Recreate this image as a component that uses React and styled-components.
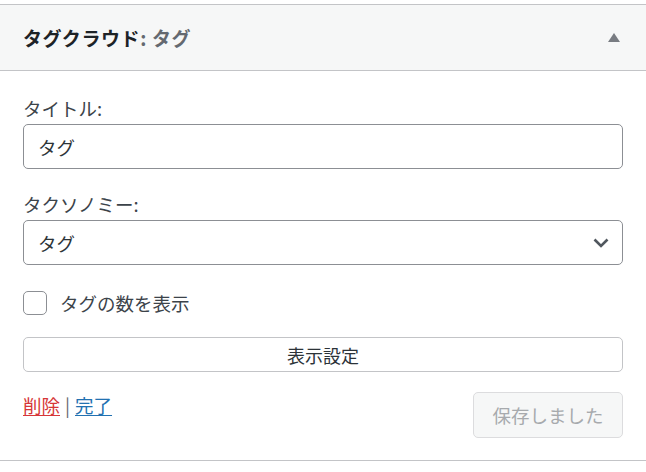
import React from "react";
import styled, { createGlobalStyle } from "styled-components";

const Global = createGlobalStyle`
  html, body { margin: 0; padding: 0; background: #fff; }
  body { font-family: "Noto Sans CJK JP", "Noto Sans", sans-serif; color: #3c434a; }
  * { box-sizing: border-box; }
`;

const Page = styled.div`
  width: 646px;
  height: 472px;
  padding-top: 4px;
  background: #fff;
`;

const Widget = styled.div`
  border-top: 1px solid #c3c4c7;
  border-bottom: 1px solid #c3c4c7;
  background: #fff;
`;

const Header = styled.div`
  height: 66px;
  background: #f6f7f7;
  border-bottom: 1px solid #c3c4c7;
  display: flex;
  align-items: center;
  justify-content: space-between;
  padding: 0 26px 0 23px;
`;

const Title = styled.h3`
  margin: 0;
  font-size: 19px;
  line-height: 26px;
  font-weight: 700;
  letter-spacing: 0.6px;
  color: #1d2327;
`;

const Sub = styled.span`
  font-weight: 600;
  color: #646970;
`;

const Toggle = styled.svg`
  width: 12px;
  height: 9px;
  display: block;
`;

const Body = styled.div`
  padding: 24px 23px 22px 23px;
  display: flex;
  flex-direction: column;
`;

const Field = styled.div`
  display: flex;
  flex-direction: column;
  gap: 3px;
  margin-bottom: ${(p) => p.$mb || 0}px;
`;

const Label = styled.label`
  font-size: 18.5px;
  line-height: 26px;
  color: #3c434a;
`;

const Input = styled.div`
  height: 45px;
  border: 1px solid #8c8f94;
  border-radius: 5px;
  display: flex;
  align-items: center;
  justify-content: space-between;
  padding: 0 13px 0 14px;
  font-size: 18.5px;
  color: #2c3338;
  background: #fff;
`;

const Chevron = styled.svg`
  width: 16px;
  height: 10px;
  display: block;
`;

const CheckRow = styled.div`
  display: flex;
  align-items: center;
  gap: 13px;
  margin-bottom: 21px;
`;

const Box = styled.span`
  width: 24px;
  height: 24px;
  border: 1px solid #8c8f94;
  border-radius: 5px;
  background: #fff;
  flex: none;
`;

const CheckText = styled.span`
  font-size: 18.5px;
  line-height: 26px;
  color: #3c434a;
`;

const WideButton = styled.div`
  height: 35px;
  border: 1px solid #c3c4c7;
  border-radius: 5px;
  display: flex;
  align-items: center;
  justify-content: center;
  font-size: 18px;
  color: #2c3338;
  background: #fff;
  margin-bottom: 20px;
`;

const Actions = styled.div`
  display: flex;
  justify-content: space-between;
  align-items: flex-start;
`;

const Links = styled.div`
  font-size: 18.5px;
  line-height: 26px;
  color: #646970;
`;

const Link = styled.a`
  color: ${(p) => (p.$danger ? "#d63638" : "#2271b1")};
  text-decoration: underline;
  text-underline-offset: 2px;
`;

const Sep = styled.span`
  margin: 0 5px;
  color: #646970;
`;

const SaveButton = styled.div`
  width: 150px;
  height: 46px;
  border: 1px solid #dcdcde;
  border-radius: 5px;
  background: #f6f7f7;
  color: #a7aaad;
  font-size: 18.5px;
  display: flex;
  align-items: center;
  justify-content: center;
`;

export default function App() {
  return (
    <>
      <Global />
      <Page>
        <Widget>
          <Header>
            <Title>
              タグクラウド<Sub>: タグ</Sub>
            </Title>
            <Toggle viewBox="0 0 12 9">
              <polygon points="6,0 12,9 0,9" fill="#787c82" />
            </Toggle>
          </Header>
          <Body>
            <Field $mb={22}>
              <Label>タイトル:</Label>
              <Input>タグ</Input>
            </Field>
            <Field $mb={25}>
              <Label>タクソノミー:</Label>
              <Input>
                タグ
                <Chevron viewBox="0 0 16 10">
                  <polyline points="1.5,1.5 8,8 14.5,1.5" fill="none" stroke="#50575e" strokeWidth="2.6" />
                </Chevron>
              </Input>
            </Field>
            <CheckRow>
              <Box />
              <CheckText>タグの数を表示</CheckText>
            </CheckRow>
            <WideButton>表示設定</WideButton>
            <Actions>
              <Links>
                <Link $danger>削除</Link>
                <Sep>|</Sep>
                <Link>完了</Link>
              </Links>
              <SaveButton>保存しました</SaveButton>
            </Actions>
          </Body>
        </Widget>
      </Page>
    </>
  );
}
